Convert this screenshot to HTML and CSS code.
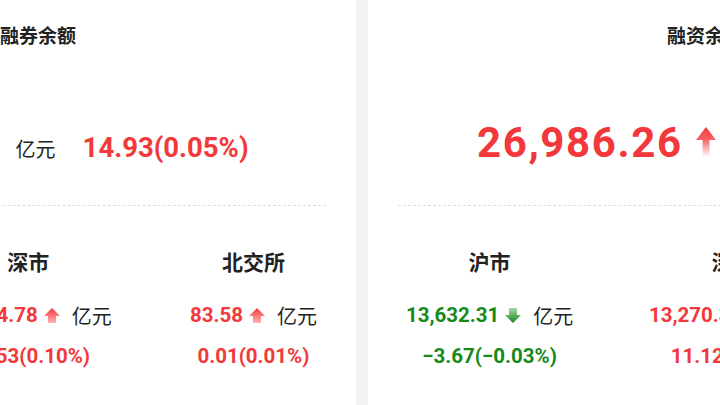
FILE: index.html
```html
<!DOCTYPE html>
<html lang="zh-CN">
<head>
    <meta charset="UTF-8">
    <title>两融余额</title>
    <link rel="stylesheet" href="styles.css">
</head>
<body>

    <div class="board">
        <!-- 融资融券合计 -->
        <section class="card">
            <h2 class="card-title">融资融券余额</h2>
            <div class="summary">
                <span class="total up">27,138.46</span>
                <span class="unit">亿元</span>
                <span class="delta up">14.93(0.05%)</span>
            </div>
            <div class="divider"></div>
            <div class="markets">
                <div class="market">
                    <div class="market-name">沪市</div>
                    <div class="market-value">
                        <span class="num up">13,730.10</span>
                        <span class="unit">亿元</span>
                    </div>
                    <div class="market-delta up">1.39(0.01%)</div>
                </div>
                <div class="market">
                    <div class="market-name">深市</div>
                    <div class="market-value">
                        <span class="num up">13,324.78</span>
                        <svg class="arrow" width="16" height="15" viewBox="0 0 16 15">
                            <defs>
                                <linearGradient id="up-a" x1="0" y1="0" x2="0" y2="1">
                                    <stop offset="0" stop-color="#f2383a"/>
                                    <stop offset="1" stop-color="#ffb4b4"/>
                                </linearGradient>
                            </defs>
                            <path d="M8 0 L16 8 L12 8 L12 15 L4 15 L4 8 L0 8 Z" fill="url(#up-a)"/>
                        </svg>
                        <span class="unit">亿元</span>
                    </div>
                    <div class="market-delta up">13.53(0.10%)</div>
                </div>
                <div class="market">
                    <div class="market-name">北交所</div>
                    <div class="market-value">
                        <span class="num up">83.58</span>
                        <svg class="arrow" width="16" height="15" viewBox="0 0 16 15">
                            <defs>
                                <linearGradient id="up-b" x1="0" y1="0" x2="0" y2="1">
                                    <stop offset="0" stop-color="#f2383a"/>
                                    <stop offset="1" stop-color="#ffb4b4"/>
                                </linearGradient>
                            </defs>
                            <path d="M8 0 L16 8 L12 8 L12 15 L4 15 L4 8 L0 8 Z" fill="url(#up-b)"/>
                        </svg>
                        <span class="unit">亿元</span>
                    </div>
                    <div class="market-delta up">0.01(0.01%)</div>
                </div>
            </div>
        </section>

        <!-- 融资余额 -->
        <section class="card">
            <h2 class="card-title">融资余额</h2>
            <div class="summary">
                <span class="total up">26,986.26</span>
                <svg class="arrow-lg" width="20" height="30" viewBox="0 0 20 30">
                    <defs>
                        <linearGradient id="up-lg" x1="0" y1="0" x2="0" y2="1">
                            <stop offset="0" stop-color="#f2383a"/>
                            <stop offset="0.4" stop-color="#f55f5f"/>
                            <stop offset="1" stop-color="#ffffff"/>
                        </linearGradient>
                    </defs>
                    <path d="M10 0 L20 13 L13.5 13 L13.5 30 L6.5 30 L6.5 13 L0 13 Z" fill="url(#up-lg)"/>
                </svg>
                <span class="unit">亿元</span>
                <span class="delta up">7.45(0.03%)</span>
            </div>
            <div class="divider"></div>
            <div class="markets">
                <div class="market">
                    <div class="market-name">沪市</div>
                    <div class="market-value">
                        <span class="num down">13,632.31</span>
                        <svg class="arrow" width="16" height="15" viewBox="0 0 16 15">
                            <defs>
                                <linearGradient id="down-a" x1="0" y1="0" x2="0" y2="1">
                                    <stop offset="0" stop-color="#a8d8a8"/>
                                    <stop offset="1" stop-color="#15871a"/>
                                </linearGradient>
                            </defs>
                            <path d="M4 0 L12 0 L12 7 L16 7 L8 15 L0 7 L4 7 Z" fill="url(#down-a)"/>
                        </svg>
                        <span class="unit">亿元</span>
                    </div>
                    <div class="market-delta down">−3.67(−0.03%)</div>
                </div>
                <div class="market">
                    <div class="market-name">深市</div>
                    <div class="market-value">
                        <span class="num up">13,270.38</span>
                        <svg class="arrow" width="16" height="15" viewBox="0 0 16 15">
                            <defs>
                                <linearGradient id="up-c" x1="0" y1="0" x2="0" y2="1">
                                    <stop offset="0" stop-color="#f2383a"/>
                                    <stop offset="1" stop-color="#ffb4b4"/>
                                </linearGradient>
                            </defs>
                            <path d="M8 0 L16 8 L12 8 L12 15 L4 15 L4 8 L0 8 Z" fill="url(#up-c)"/>
                        </svg>
                        <span class="unit">亿元</span>
                    </div>
                    <div class="market-delta up">11.12(0.08%)</div>
                </div>
                <div class="market">
                    <div class="market-name">北交所</div>
                    <div class="market-value">
                        <span class="num">83.57</span>
                        <span class="unit">亿元</span>
                    </div>
                    <div class="market-delta">0.00(0.00%)</div>
                </div>
            </div>
        </section>
    </div>

</body>
</html>
```

FILE: styles.css
```css
body {
    margin: 0;
    background: #f2f2f2;
    overflow: hidden;
    font-family: "Liberation Sans", "Noto Sans CJK SC", sans-serif;
    color: #222;
}

.board {
    display: flex;
    gap: 12px;
    margin-left: -318px;
}

.card {
    flex: 0 0 674px;
    min-height: 430px;
    padding-top: 24px;
    background: #fff;
}

.card-title {
    margin: 0;
    font-size: 19px;
    line-height: 26px;
    font-weight: 700;
    text-align: center;
}

/* numbers */
.total,
.delta,
.num,
.market-delta {
    font-family: Roboto, "Liberation Sans", sans-serif;
    font-weight: 700;
}

.up {
    color: #f2383a;
}

.down {
    color: #16891b;
}

/* big number row */
.summary {
    display: flex;
    align-items: baseline;
    gap: 13px;
    margin-top: 68px;
    padding-left: 109px;
}

.total {
    font-size: 42px;
    line-height: 50px;
    letter-spacing: 1.6px;
    margin-right: 6px;
}

.arrow-lg {
    display: block;
    margin-left: -6px;
}

.summary .unit {
    font-size: 20px;
    line-height: 28px;
}

.summary .delta {
    font-size: 27.5px;
    line-height: 34px;
    margin-left: 14px;
}

.divider {
    margin: 37px 30px 0;
    border-top: 1px dashed #ddd;
}

/* 沪 / 深 / 北 columns */
.markets {
    display: flex;
    justify-content: space-around;
    margin-top: 43px;
}

.market {
    display: flex;
    flex-direction: column;
    align-items: center;
}

.market-name {
    font-size: 21px;
    line-height: 28px;
    font-weight: 700;
}

.market-value {
    display: flex;
    align-items: center;
    height: 28px;
    margin-top: 24px;
}

.market-value .num {
    font-size: 20.5px;
}

.market-value .arrow {
    display: block;
    margin-left: 6px;
}

.market-value .unit {
    font-size: 20px;
    margin-left: 12px;
}

.market-delta {
    font-size: 20.5px;
    line-height: 28px;
    margin-top: 13px;
}
```
